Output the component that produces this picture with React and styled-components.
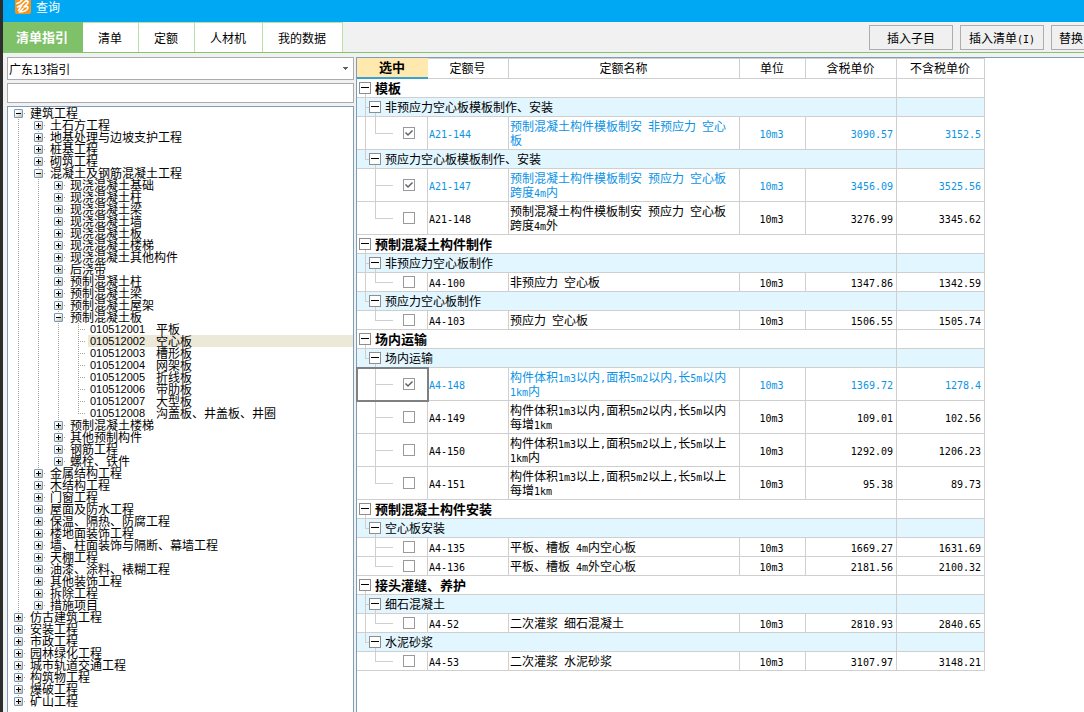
import React, { useState } from "react";
import styled, { createGlobalStyle, css } from "styled-components";

const GlobalStyle = createGlobalStyle`
  * { box-sizing: border-box; }
  body {
    margin: 0;
    overflow: hidden;
    font: 12px/14px "Noto Sans CJK SC", sans-serif;
    color: #000;
    background: #f0f0f0;
  }
  button, input, select { font: inherit; color: inherit; }
`;

const line = "#cfcfcf";
const frame = "#7f9db9";
const dots = "#a8a898";

const Window = styled.div`
  height: 100vh;
  display: flex;
  flex-direction: column;
  overflow: hidden;
  border-left: 3px solid #2d2d2d;
  background: #f1f1f1;
`;

const TitleBar = styled.header`
  display: flex;
  align-items: flex-start;
  gap: 5px;
  flex: none;
  height: 22px;
  padding-left: 12px;
  background: #00a8f3;
  color: #fff;
  line-height: 13px;
  svg { display: block; }
`;

const Toolbar = styled.div`
  display: flex;
  align-items: stretch;
  justify-content: space-between;
  flex: none;
  height: 31px;
  border-bottom: 1px solid #80c66c;
`;

const Tabs = styled.nav`
  display: flex;
`;

const Tab = styled.button`
  height: 30px;
  padding: 0 16px 0 15px;
  border: solid #b5e3a2;
  border-width: 1px 1px 0 0;
  background: #fff;
  ${(p) =>
    p.$active &&
    css`
      padding: 0 14px 2px 13px;
      border-color: #7fc168;
      background: #7fc168;
      color: #fff;
      font-size: 13px;
      font-weight: 700;
    `}
`;

const Actions = styled.div`
  display: flex;
  gap: 7px;
  padding-top: 3px;
`;

const ActionButton = styled.button`
  width: ${(p) => (p.$cut ? 33 : 84)}px;
  height: 25px;
  padding: 0 0 0 ${(p) => (p.$cut ? 7 : 0)}px;
  overflow: hidden;
  white-space: nowrap;
  border: 1px solid #adadad;
  border-right-width: ${(p) => (p.$cut ? 0 : 1)}px;
  background: #f0f0f0;
  text-align: ${(p) => (p.$cut ? "left" : "center")};
`;

const Body = styled.main`
  flex: 1;
  display: flex;
  gap: 2px;
  min-height: 0;
  padding: 4px 0 0 4px;
`;

const Side = styled.aside`
  flex: none;
  width: 347px;
  display: flex;
  flex-direction: column;
  gap: 3px;
`;

const Picker = styled.div`
  display: grid;
  align-items: center;
  > * { grid-area: 1 / 1; }
  svg { justify-self: end; margin-right: 6px; pointer-events: none; }
`;

const Select = styled.select`
  appearance: none;
  width: 100%;
  height: 23px;
  padding: 0 16px 0 1px;
  border: 1px solid #ababab;
  border-radius: 0;
  background: #fff;
`;

const Search = styled.input`
  flex: none;
  width: 100%;
  height: 20px;
  padding: 0 2px;
  border: 1px solid #ababab;
  border-radius: 0;
  background: #fff;
`;

const Tree = styled.ul`
  flex: 1;
  min-height: 0;
  margin: 0;
  padding: 0;
  overflow: hidden;
  list-style: none;
  border: 1px solid ${frame};
  border-bottom: 0;
  background: #fff;
`;

const TreeRow = styled.li`
  display: flex;
  height: 12px;
  line-height: 11px;
  white-space: nowrap;
`;

const vDots = `repeating-linear-gradient(${dots} 0 1px, transparent 1px 2px)`;
const hDots = `repeating-linear-gradient(90deg, ${dots} 0 1px, transparent 1px 2px)`;

const Guide = styled.span`
  flex: none;
  width: 20px;
  height: 12px;
  display: flex;
  justify-content: center;
  align-items: center;
  background-repeat: no-repeat;
  background-image: ${vDots}, ${(p) => (p.$branch ? hDots : "none")};
  background-position: 10px ${(p) => p.$from || 0}px, 10px 6px;
  background-size: 1px ${(p) => p.$length}px, 8px 1px;
`;

const Expander = styled.button`
  width: 9px;
  height: 9px;
  margin: 1px 0 0 1px;
  padding: 0;
  border: 1px solid #7898b5;
  border-radius: 1px;
  background: linear-gradient(135deg, #fff 30%, #c3bbaa);
  svg { display: block; }
`;

const TreeLabel = styled.span`
  flex: ${(p) => (p.$leaf ? 1 : "none")};
  display: flex;
  padding-left: 2px;
  background: ${(p) => (p.$selected ? "#ece9d8" : "transparent")};
`;

const Code = styled.span`
  width: 66px;
  font: 11px/12px "Liberation Sans", sans-serif;
`;

const Sheet = styled.section`
  flex: 1;
  min-width: 0;
  border: solid ${frame};
  border-width: 1px 0 0 1px;
  background: #fff;
`;

const Table = styled.table`
  width: 628px;
  table-layout: fixed;
  border-collapse: separate;
  border-spacing: 0;
`;

const Th = styled.th`
  height: 21px;
  padding: 0 1px 1px 0;
  border: solid ${line};
  border-width: 1px 1px 1px 0;
  font-weight: 400;
  ${(p) =>
    p.$picked &&
    css`
      border-width: 0 0 2px;
      border-color: #3a9fd1;
      background: #ffe9ae;
      font-size: 13px;
      font-weight: 700;
    `}
`;

const Row = styled.tr`
  color: ${(p) => (p.$picked ? "#0b93e6" : "#000")};
  background: ${(p) => (p.$sub ? "#e2f6ff" : "#fff")};
  font-size: ${(p) => (p.$group ? 13 : 12)}px;
  font-weight: ${(p) => (p.$group ? 700 : 400)};
`;

const Td = styled.td`
  height: 19px;
  padding: 2px 3px 2px 1px;
  border: solid ${line};
  border-width: 0 1px 1px 0;
  text-align: ${(p) => p.$align || "left"};
  white-space: nowrap;
`;

const solid = `linear-gradient(${line}, ${line})`;

const HeadCell = styled(Td)`
  padding: 0 0 0 ${(p) => (p.$sub ? 12 : 2)}px;
  background-repeat: no-repeat;
  ${(p) =>
    p.$sub
      ? css`
          background-image: ${solid}, ${solid}, ${solid};
          background-position: 8px 0, 8px 50%, 18px 100%;
          background-size: 1px ${p.$last ? "50%" : "100%"}, 4px 1px, 1px 3px;
        `
      : css`
          background-image: ${solid};
          background-position: 8px 100%;
          background-size: 1px 3px;
        `}
`;

const HeadLine = styled.div`
  display: flex;
  align-items: center;
  gap: 4px;
`;

const Fold = styled.button`
  flex: none;
  width: 12px;
  height: 12px;
  padding: 0;
  border: 1px solid #8e8e8e;
  background: #fff;
  svg { display: block; }
`;

const PickCell = styled(Td)`
  padding: 0 0 0 46px;
  background-repeat: no-repeat;
  background-image: ${solid}, ${solid}, ${(p) => (p.$through ? solid : "none")};
  background-position: 18px 0, 18px 50%, 8px 0;
  background-size: 1px ${(p) => (p.$last ? "50%" : "100%")}, 18px 1px, 1px 100%;
  outline: ${(p) => (p.$focus ? "2px solid #808080" : "none")};
  outline-offset: -1px;
`;

const Check = styled.input`
  appearance: none;
  display: block;
  width: 12px;
  height: 12px;
  margin: 0;
  border: 1px solid #9a9a9a;
  background: #fff;
  &:checked {
    background: #fff
      url("data:image/svg+xml,%3Csvg xmlns='http://www.w3.org/2000/svg' width='10' height='10'%3E%3Cpath d='M1.5 4.5L4 7L8.5 2.5' fill='none' stroke='%23606070' stroke-width='1.5'/%3E%3C/svg%3E")
      no-repeat center;
  }
`;

const Latin = styled.span`
  font: 10px/10px "DejaVu Sans Mono", monospace;
  white-space: pre;
`;

/* Half-width characters take the 6px cell of the monospace face. */
function Mixed({ text }) {
  return text
    .split(/([\x20-\x7e]+)/)
    .map((part, i) => (i % 2 ? <Latin key={i}>{part}</Latin> : part));
}

const tree = [
  [0, "建筑工程", "-"],
  [1, "土石方工程"],
  [1, "地基处理与边坡支护工程"],
  [1, "桩基工程"],
  [1, "砌筑工程"],
  [1, "混凝土及钢筋混凝土工程", "-"],
  [2, "现浇混凝土基础"],
  [2, "现浇混凝土柱"],
  [2, "现浇混凝土梁"],
  [2, "现浇混凝土墙"],
  [2, "现浇混凝土板"],
  [2, "现浇混凝土楼梯"],
  [2, "现浇混凝土其他构件"],
  [2, "后浇带"],
  [2, "预制混凝土柱"],
  [2, "预制混凝土梁"],
  [2, "预制混凝土屋架"],
  [2, "预制混凝土板", "-"],
  [3, "平板", "010512001"],
  [3, "空心板", "010512002"],
  [3, "槽形板", "010512003"],
  [3, "网架板", "010512004"],
  [3, "折线板", "010512005"],
  [3, "带肋板", "010512006"],
  [3, "大型板", "010512007"],
  [3, "沟盖板、井盖板、井圈", "010512008"],
  [2, "预制混凝土楼梯"],
  [2, "其他预制构件"],
  [2, "钢筋工程"],
  [2, "螺栓、铁件"],
  [1, "金属结构工程"],
  [1, "木结构工程"],
  [1, "门窗工程"],
  [1, "屋面及防水工程"],
  [1, "保温、隔热、防腐工程"],
  [1, "楼地面装饰工程"],
  [1, "墙、柱面装饰与隔断、幕墙工程"],
  [1, "天棚工程"],
  [1, "油漆、涂料、裱糊工程"],
  [1, "其他装饰工程"],
  [1, "拆除工程"],
  [1, "措施项目"],
  [0, "仿古建筑工程"],
  [0, "安装工程"],
  [0, "市政工程"],
  [0, "园林绿化工程"],
  [0, "城市轨道交通工程"],
  [0, "构筑物工程"],
  [0, "爆破工程"],
  [0, "矿山工程"],
];

/* True when a later row continues the branch drawn at this level. */
function continues(index, level) {
  for (let i = index + 1; i < tree.length; i++) {
    if (tree[i][0] < level) return false;
    if (tree[i][0] === level) return true;
  }
  return false;
}

const groups = [
  ["模板", [
    ["非预应力空心板模板制作、安装", [
      ["A21-144", ["预制混凝土构件模板制安 非预应力 空心", "板"], "3090.57", "3152.5", true],
    ]],
    ["预应力空心板模板制作、安装", [
      ["A21-147", ["预制混凝土构件模板制安 预应力 空心板", "跨度4m内"], "3456.09", "3525.56", true],
      ["A21-148", ["预制混凝土构件模板制安 预应力 空心板", "跨度4m外"], "3276.99", "3345.62"],
    ]],
  ]],
  ["预制混凝土构件制作", [
    ["非预应力空心板制作", [["A4-100", ["非预应力 空心板"], "1347.86", "1342.59"]]],
    ["预应力空心板制作", [["A4-103", ["预应力 空心板"], "1506.55", "1505.74"]]],
  ]],
  ["场内运输", [
    ["场内运输", [
      ["A4-148", ["构件体积1m3以内,面积5m2以内,长5m以内", "1km内"], "1369.72", "1278.4", true],
      ["A4-149", ["构件体积1m3以内,面积5m2以内,长5m以内", "每增1km"], "109.01", "102.56"],
      ["A4-150", ["构件体积1m3以上,面积5m2以上,长5m以上", "1km内"], "1292.09", "1206.23"],
      ["A4-151", ["构件体积1m3以上,面积5m2以上,长5m以上", "每增1km"], "95.38", "89.73"],
    ]],
  ]],
  ["预制混凝土构件安装", [
    ["空心板安装", [
      ["A4-135", ["平板、槽板 4m内空心板"], "1669.27", "1631.69"],
      ["A4-136", ["平板、槽板 4m外空心板"], "2181.56", "2100.32"],
    ]],
  ]],
  ["接头灌缝、养护", [
    ["细石混凝土", [["A4-52", ["二次灌浆 细石混凝土"], "2810.93", "2840.65"]]],
    ["水泥砂浆", [["A4-53", ["二次灌浆 水泥砂浆"], "3107.97", "3148.21"]]],
  ]],
];

const columns = [
  ["选中", 71],
  ["定额号", 81],
  ["定额名称", 231],
  ["单位", 66],
  ["含税单价", 91],
  ["不含税单价", 88],
];

function TreeItem({ index, selected, onSelect }) {
  const [level, label, extra] = tree[index];
  const leaf = level === 3;
  const open = extra === "-";
  const guides = [];
  for (let l = 0; l < level; l++) {
    guides.push(<Guide key={l} $length={continues(index, l) ? 12 : 0} />);
  }
  const first = index === 0;
  const more = continues(index, level);
  return (
    <TreeRow onClick={onSelect}>
      {guides}
      <Guide $branch $from={first ? 6 : 0} $length={first ? 6 : more ? 12 : 6}>
        {!leaf && (
          <Expander aria-label={(open ? "折叠" : "展开") + label}>
            <svg width="7" height="7" viewBox="0 0 7 7" shapeRendering="crispEdges">
              <path d={open ? "M1 3h5v1H1z" : "M1 3h5v1H1zM3 1h1v5H3z"} />
            </svg>
          </Expander>
        )}
      </Guide>
      <TreeLabel $leaf={leaf} $selected={selected}>
        {leaf && <Code>{extra}</Code>}
        {label}
      </TreeLabel>
    </TreeRow>
  );
}

function FoldButton({ label }) {
  return (
    <Fold aria-label={"折叠" + label}>
      <svg width="10" height="10" viewBox="0 0 10 10" shapeRendering="crispEdges">
        <path d="M1 4h8v1H1z" />
      </svg>
    </Fold>
  );
}

function HeadRow({ label, sub, last }) {
  return (
    <Row $group={!sub} $sub={sub}>
      <HeadCell colSpan={5} $sub={sub} $last={last}>
        <HeadLine>
          <FoldButton label={label} />
          {label}
        </HeadLine>
      </HeadCell>
      <Td />
    </Row>
  );
}

function ItemRow({ item, through, last }) {
  const [code, name, taxed, untaxed, initial] = item;
  const [picked, setPicked] = useState(!!initial);
  return (
    <Row $picked={picked}>
      <PickCell $through={through} $last={last} $focus={code === "A4-148"}>
        <Check
          type="checkbox"
          aria-label={code}
          checked={picked}
          onChange={(e) => setPicked(e.target.checked)}
        />
      </PickCell>
      <Td><Mixed text={code} /></Td>
      <Td>
        {name.map((part, i) => (
          <React.Fragment key={i}>
            {i > 0 && <br />}
            <Mixed text={part} />
          </React.Fragment>
        ))}
      </Td>
      <Td $align="center"><Mixed text="10m3" /></Td>
      <Td $align="right"><Mixed text={taxed} /></Td>
      <Td $align="right"><Mixed text={untaxed} /></Td>
    </Row>
  );
}

function Logo() {
  return (
    <svg width="16" height="14" viewBox="0 0 16 14" aria-hidden="true">
      <path d="M0 0h16v12a2 2 0 0 1-2 2H2a2 2 0 0 1-2-2z" fill="#f7941d" />
      <path
        d="M2 3.5C4 3 5.5 2 7 0M2.5 7C6 6 8 4 10 1.5C12 0 14 1.5 12.5 3.5L9 7M7 4.5L3.5 10.5M9 7C12.5 5.5 14 7 12 9.500C10 11.500 7 12 4.500 12L8 8.500"
        fill="none"
        stroke="#fff"
        strokeWidth="1.6"
        strokeLinecap="round"
        strokeLinejoin="round"
      />
    </svg>
  );
}

export default function App() {
  const [selected, setSelected] = useState(19);
  const [tab, setTab] = useState("清单指引");
  return (
    <>
      <GlobalStyle />
      <Window>
        <TitleBar>
          <Logo />
          查询
        </TitleBar>
        <Toolbar>
          <Tabs>
            {["清单指引", "清单", "定额", "人材机", "我的数据"].map((name) => (
              <Tab key={name} $active={tab === name} onClick={() => setTab(name)}>
                {name}
              </Tab>
            ))}
          </Tabs>
          <Actions>
            <ActionButton>插入子目</ActionButton>
            <ActionButton><Mixed text="插入清单(I)" /></ActionButton>
            <ActionButton $cut>替换</ActionButton>
          </Actions>
        </Toolbar>
        <Body>
          <Side>
            <Picker>
              <Select aria-label="指引">
                <option>广东13指引</option>
              </Select>
              <svg width="5" height="3" viewBox="0 0 5 3" shapeRendering="crispEdges">
                <path d="M0 0h5v1H4v1H3v1H2V2H1V1H0z" fill="#606070" />
              </svg>
            </Picker>
            <Search aria-label="搜索" />
            <Tree>
              {tree.map((_, i) => (
                <TreeItem key={i} index={i} selected={selected === i} onSelect={() => setSelected(i)} />
              ))}
            </Tree>
          </Side>
          <Sheet>
            <Table>
              <colgroup>
                {columns.map(([name, width]) => <col key={name} width={width} />)}
              </colgroup>
              <thead>
                <tr>
                  {columns.map(([name], i) => <Th key={name} $picked={i === 0}>{name}</Th>)}
                </tr>
              </thead>
              <tbody>
                {groups.map(([group, subs], g) => (
                  <React.Fragment key={g}>
                    <HeadRow label={group} />
                    {subs.map(([sub, items], s) => (
                      <React.Fragment key={s}>
                        <HeadRow sub label={sub} last={s === subs.length - 1} />
                        {items.map((item, i) => (
                          <ItemRow
                            key={item[0]}
                            item={item}
                            through={s < subs.length - 1}
                            last={i === items.length - 1}
                          />
                        ))}
                      </React.Fragment>
                    ))}
                  </React.Fragment>
                ))}
              </tbody>
            </Table>
          </Sheet>
        </Body>
      </Window>
    </>
  );
}
